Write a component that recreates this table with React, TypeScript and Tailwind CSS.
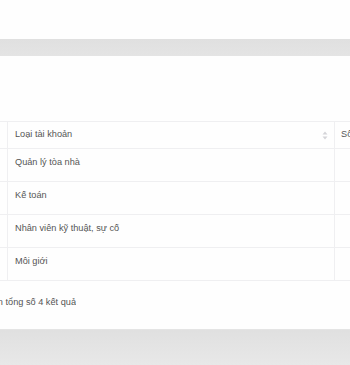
const rows = [
  "Quản lý tòa nhà",
  "Kế toán",
  "Nhân viên kỹ thuật, sự cố",
  "Môi giới",
];

function SortIcon() {
  return (
    <svg width="6" height="9" viewBox="0 0 6 9" className="text-[#d4d4d8]">
      <path d="M3 0.5 L5.5 3.5 H0.5 Z" fill="currentColor" />
      <path d="M3 8.5 L5.5 5.5 H0.5 Z" fill="currentColor" />
    </svg>
  );
}

export default function App() {
  return (
    <div className="w-[350px] h-[365px] overflow-hidden bg-[#fefefe] flex flex-col font-['Liberation_Sans',Arial,sans-serif] text-[9.2px] text-[#555]">
      <div className="h-[39px] shrink-0" />
      <div className="h-[17px] shrink-0 bg-gradient-to-b from-[#e0e0e0] to-[#e4e4e4]" />

      {/* account type panel */}
      <div className="h-[273px] shrink-0 bg-[#fefefe] pt-[65px]">
        <div className="border-t border-[#efeff1]">
          {/* header */}
          <div className="flex h-[27px] border-b border-[#efeff1]">
            <div className="w-[8px] border-r border-[#efeff1]" />
            <div className="w-[327px] border-r border-[#efeff1] flex items-center justify-between pl-[7px] pr-[6px]">
              <span>Loại tài khoản</span>
              <SortIcon />
            </div>
            <div className="flex-1 flex items-center pl-[6px] whitespace-nowrap overflow-hidden">
              Số lượng tài khoản
            </div>
          </div>
          {rows.map((r) => (
            <div key={r} className="flex h-[33px] border-b border-[#efeff1]">
              <div className="w-[8px] border-r border-[#efeff1]" />
              <div className="w-[327px] border-r border-[#efeff1] pl-[7px] pt-[7px] leading-[12px]">
                {r}
              </div>
              <div className="flex-1" />
            </div>
          ))}
        </div>

        {/* pagination summary */}
        <div className="mt-[15px] w-[76px] flex justify-end overflow-hidden whitespace-nowrap leading-[12px]">
          <span>Hiển thị 1 - 4 trên tổng số 4 kết quả</span>
        </div>
      </div>

      <div className="flex-1 bg-gradient-to-b from-[#e0e0e0] to-[#e8e8e8] border-t border-[#e4e4e4]" />
    </div>
  );
}
